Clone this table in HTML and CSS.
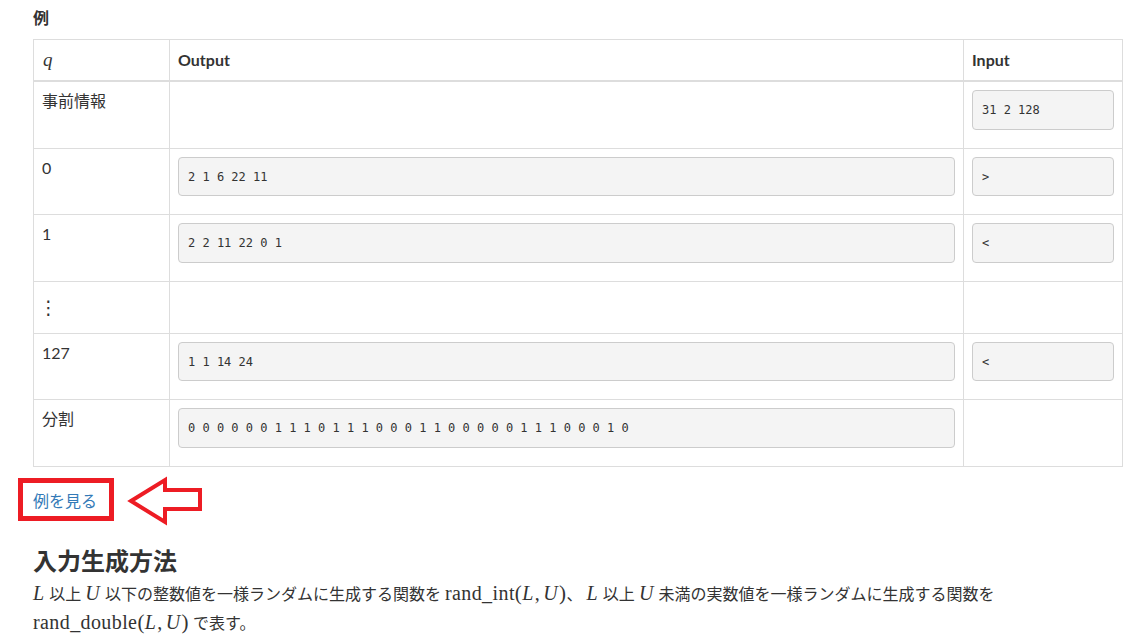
FILE: index.html
```html
<!DOCTYPE html>
<html lang="ja">

<head>
    <meta charset="UTF-8">
    <meta name="viewport" content="width=device-width, initial-scale=1.0">
    <title>入力生成方法</title>
    <link rel="stylesheet" href="styles.css">
</head>

<body>
    <div class="part">
        <h4 class="sample_title">例</h4>
        <table class="io_table">
            <colgroup>
                <col class="col_q">
                <col class="col_out">
                <col class="col_in">
            </colgroup>
            <thead>
                <tr>
                    <th><span class="math_var">q</span></th>
                    <th>Output</th>
                    <th>Input</th>
                </tr>
            </thead>
            <tbody>
                <tr>
                    <td>事前情報</td>
                    <td></td>
                    <td><pre>31 2 128</pre></td>
                </tr>
                <tr>
                    <td>0</td>
                    <td><pre>2 1 6 22 11</pre></td>
                    <td><pre>&gt;</pre></td>
                </tr>
                <tr>
                    <td>1</td>
                    <td><pre>2 2 11 22 0 1</pre></td>
                    <td><pre>&lt;</pre></td>
                </tr>
                <tr class="gap_row">
                    <td><div class="vdots">⋮</div></td>
                    <td></td>
                    <td></td>
                </tr>
                <tr>
                    <td>127</td>
                    <td><pre>1 1 14 24</pre></td>
                    <td><pre>&lt;</pre></td>
                </tr>
                <tr>
                    <td>分割</td>
                    <td><pre>0 0 0 0 0 0 1 1 1 0 1 1 1 0 0 0 1 1 0 0 0 0 0 1 1 1 0 0 0 1 0</pre></td>
                    <td></td>
                </tr>
            </tbody>
        </table>

        <div class="example_link">
            <a href="#">例を見る</a>
            <!-- red markup drawn over the link -->
            <svg class="marker" width="200" height="60" viewBox="0 0 200 60">
                <rect x="10.5" y="11.5" width="91" height="38" fill="none" stroke="#ed1c24" stroke-width="5"/>
                <polygon points="121,32 155,11 155,21 190,21 190,40 155,40 155,53" fill="#fff" stroke="#ed1c24" stroke-width="4" stroke-linejoin="miter"/>
            </svg>
        </div>

        <h3 class="section_title">入力生成方法</h3>
        <p class="statement">
            <span class="mi">L</span> 以上 <span class="mi">U</span> 以下の整数値を一様ランダムに生成する関数を <span class="mrow">rand_int<span class="mo">(</span><span class="mi">L</span>,<span class="thin"></span><span class="mi">U</span><span class="mo">)</span></span>、 <span class="mi">L</span> 以上 <span class="mi">U</span> 未満の実数値を一様ランダムに生成する関数を<br>
            <span class="mrow">rand_double<span class="mo">(</span><span class="mi">L</span>,<span class="thin"></span><span class="mi">U</span><span class="mo">)</span></span> で表す。
        </p>
    </div>
</body>

</html>
```

FILE: styles.css
```css
body {
    margin: 0;
    background: #fff;
    color: #333;
    font-family: Lato, "Noto Sans CJK JP", sans-serif;
    font-size: 16px;
    line-height: 1.42857;
}

.part {
    padding-left: 33px;
    width: 1090px;
}

.sample_title {
    margin: 6px 0 10px;
    font-size: 16px;
    line-height: 23px;
    font-weight: bold;
}

/* table */
.io_table {
    width: 1090px;
    border-collapse: collapse;
    table-layout: fixed;
    border: 1px solid #ddd;
}

.col_q {
    width: 136px;
}

.col_out {
    width: 794px;
}

.io_table th,
.io_table td {
    border: 1px solid #ddd;
    padding: 8px;
    text-align: left;
    vertical-align: top;
}

.io_table th {
    line-height: 24px;
    font-weight: bold;
    border-bottom-width: 2px;
}

.math_var {
    font-family: "Liberation Serif", serif;
    font-style: italic;
    font-weight: normal;
    font-size: 19px;
    padding-left: 1px;
}

.io_table pre {
    margin: 0 0 10px;
    padding: 11px 9px 9px;
    border: 1px solid #ccc;
    border-radius: 4px;
    background-color: #f4f4f4;
    font-family: "DejaVu Sans Mono", monospace;
    font-size: 12px;
    line-height: 17.6px;
    color: #333;
    white-space: pre;
}

.vdots {
    height: 35px;
    font-family: "DejaVu Sans", sans-serif;
    font-size: 19px;
    line-height: 35px;
    margin-left: -3px;
}

/* link with red markup */
.example_link {
    position: relative;
    margin-top: 22px;
    height: 23px;
    line-height: 23px;
}

.example_link a {
    color: #337ab7;
    text-decoration: none;
}

.marker {
    position: absolute;
    left: -23px;
    top: -20px;
}

.section_title {
    margin: 32px 0 1px;
    font-size: 24px;
    line-height: 34px;
    font-weight: bold;
}

.statement {
    margin: 0;
    line-height: 28px;
}

.mi {
    font-family: "Liberation Serif", serif;
    font-style: italic;
    font-size: 20px;
    padding-right: 1px;
}

.mrow {
    font-family: "Liberation Serif", serif;
    font-size: 20px;
    letter-spacing: 0.4px;
}

.mo {
    font-size: 21px;
}

.thin {
    display: inline-block;
    width: 3px;
}
```
